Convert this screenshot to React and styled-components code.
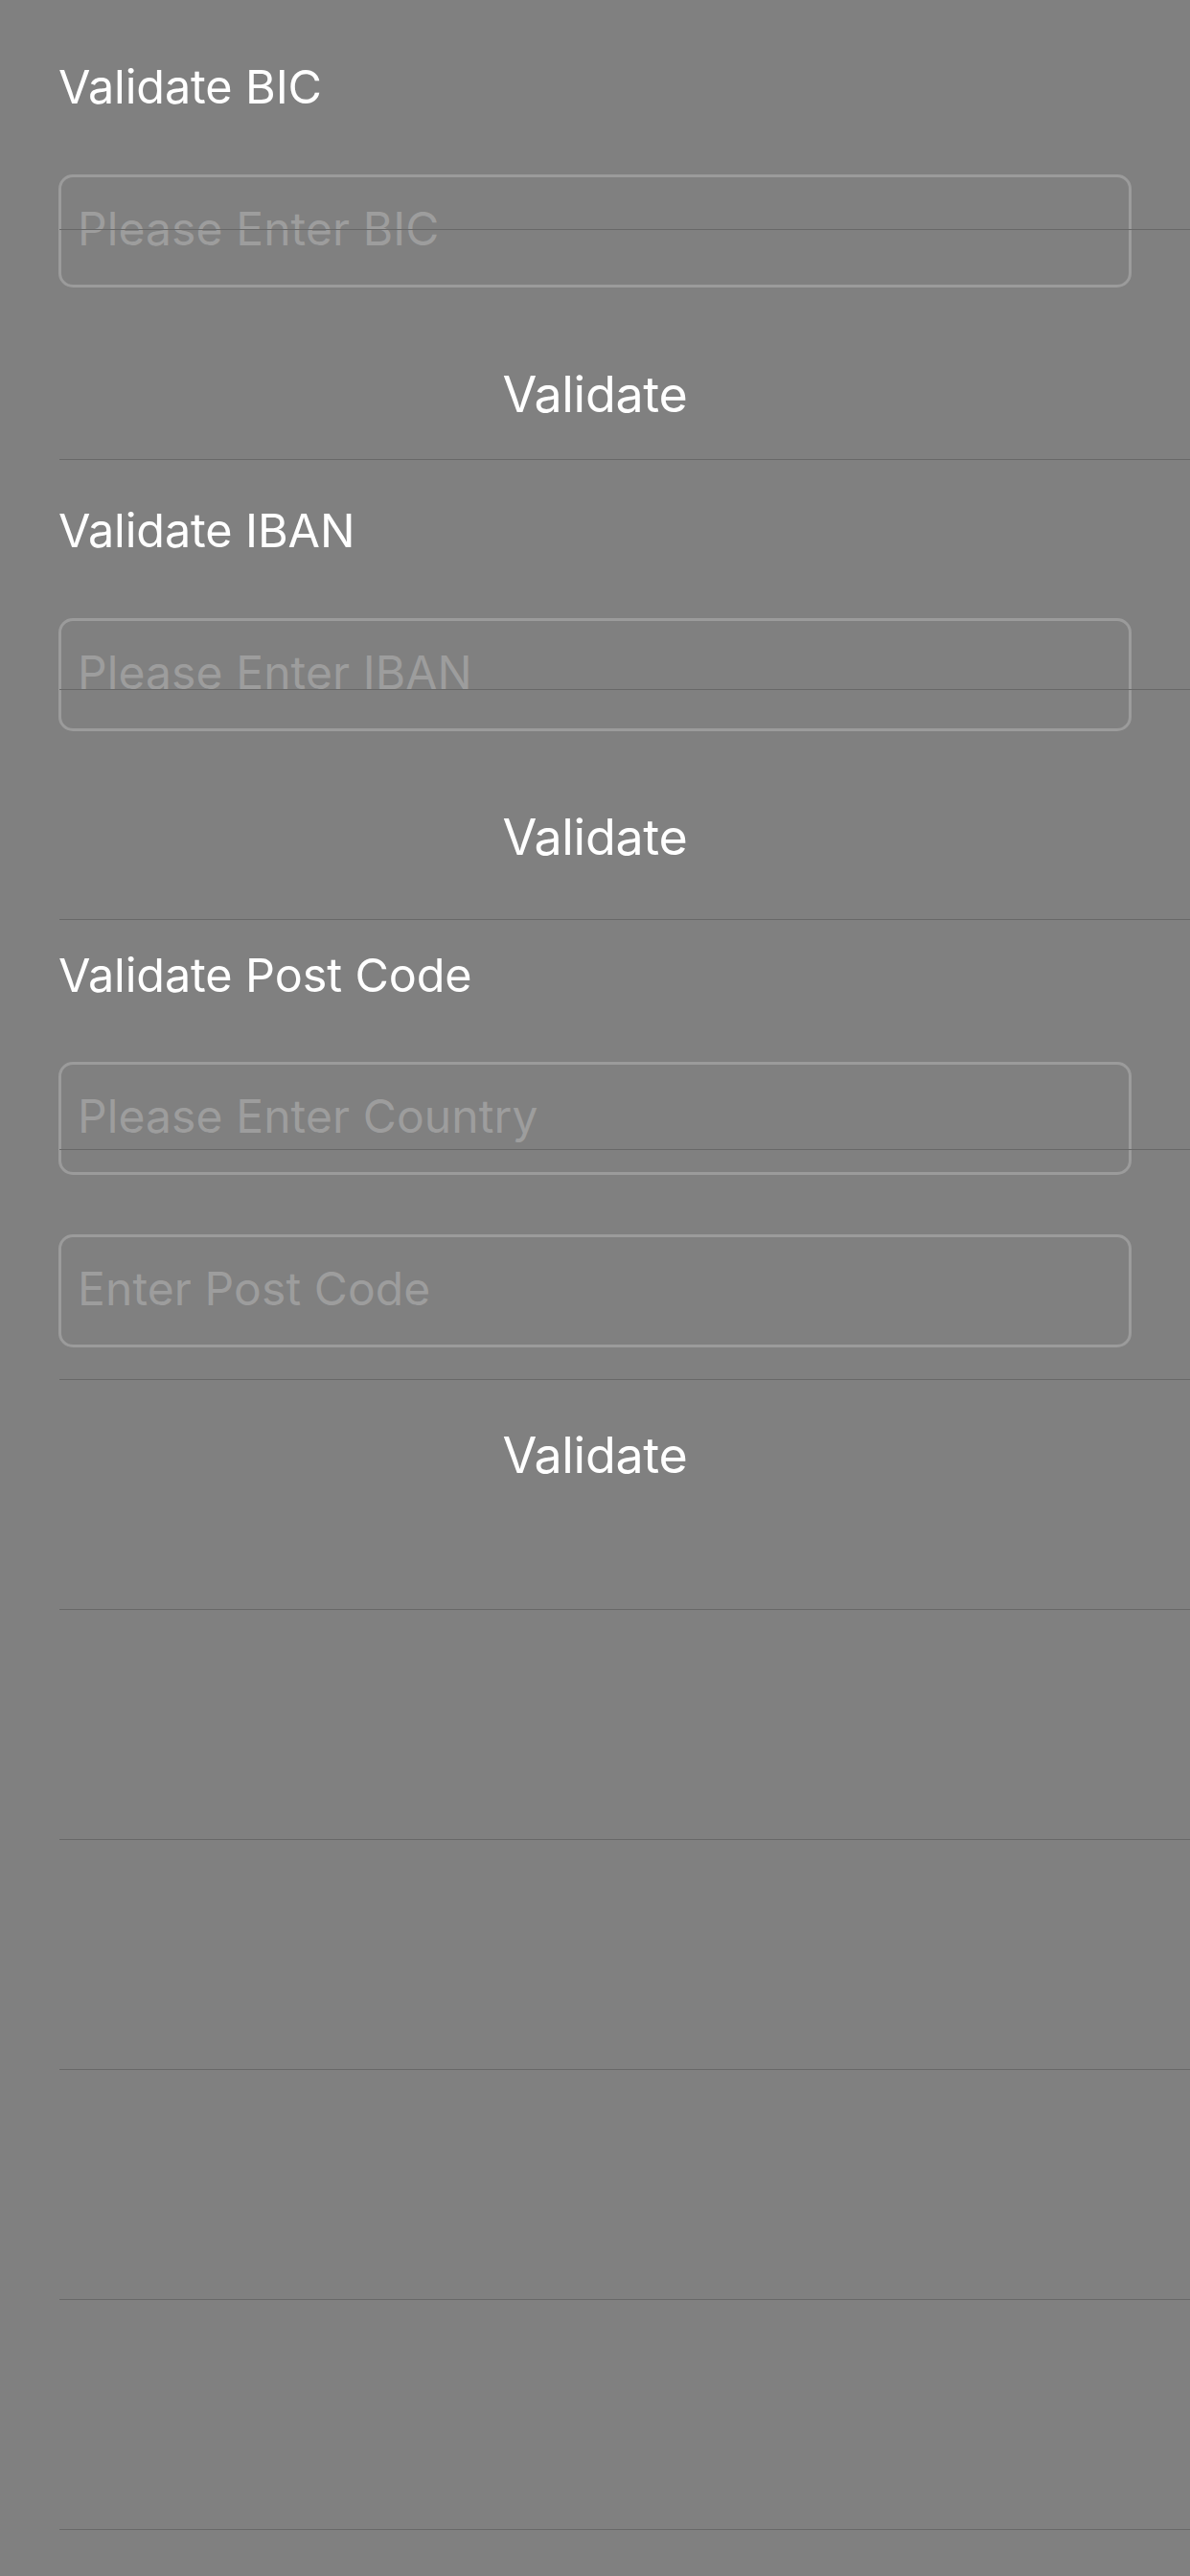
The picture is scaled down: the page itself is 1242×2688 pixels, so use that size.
import React from 'react';
import styled, { createGlobalStyle } from 'styled-components';

const GlobalStyle = createGlobalStyle`
  html, body {
    margin: 0;
    padding: 0;
    background: #808080;
  }
  * {
    box-sizing: border-box;
  }
`;

// Tela inteira: a tabela de fundo e o formulário ocupam a mesma célula da grid
const Screen = styled.div`
  display: grid;
  width: 1242px;
  height: 2688px;
  overflow: hidden;
  background: #808080;
  font-family: Inter, "Noto Sans", "Liberation Sans", sans-serif;
`;

const Form = styled.div`
  grid-area: 1 / 1;
  display: flex;
  flex-direction: column;
  padding: 0 61px;
`;

const TableLayer = styled.div`
  grid-area: 1 / 1;
  display: flex;
  flex-direction: column;
  pointer-events: none;
  z-index: 1;
`;

const EmptyRow = styled.div`
  flex: none;
  height: 240px;
  margin-left: 62px;
  border-bottom: 1px solid #686868;
`;

const Section = styled.section`
  display: flex;
  flex-direction: column;
`;

const SectionTitle = styled.h2`
  margin: ${(p) => p.$top}px 0 0;
  font-size: 48.5px;
  line-height: 49px;
  font-weight: 400;
  letter-spacing: -0.1px;
  color: #ffffff;
`;

const TextField = styled.input`
  display: block;
  width: 100%;
  height: 118px;
  margin-top: ${(p) => p.$top}px;
  padding: 0 17px 5px;
  border: 3px solid #9b9b9b;
  border-radius: 15px;
  background: transparent;
  font-family: inherit;
  font-size: 48px;
  letter-spacing: 0.1px;
  color: #ffffff;
  outline: none;

  &::placeholder {
    color: #9d9d9d;
    opacity: 1;
  }
`;

const ValidateButton = styled.button`
  display: block;
  width: 100%;
  margin-top: ${(p) => p.$top}px;
  padding: 0;
  border: none;
  background: none;
  font-family: inherit;
  font-size: 52px;
  line-height: 52px;
  font-weight: 400;
  color: #ffffff;
  text-align: center;
  letter-spacing: -0.3px;
  cursor: pointer;
`;

const sections = [
  {
    title: 'Validate BIC',
    titleTop: 66,
    fields: [{ placeholder: 'Please Enter BIC', top: 67 }],
    buttonTop: 86,
  },
  {
    title: 'Validate IBAN',
    titleTop: 91,
    fields: [{ placeholder: 'Please Enter IBAN', top: 67 }],
    buttonTop: 85,
  },
  {
    title: 'Validate Post Code',
    titleTop: 93,
    fields: [
      { placeholder: 'Please Enter Country', top: 66 },
      { placeholder: 'Enter Post Code', top: 62 },
    ],
    buttonTop: 87,
  },
];

export default function App() {
  return (
    <>
      <GlobalStyle />
      <Screen>
        <Form>
          {sections.map((s) => (
            <Section key={s.title}>
              <SectionTitle $top={s.titleTop}>{s.title}</SectionTitle>
              {s.fields.map((f) => (
                <TextField key={f.placeholder} $top={f.top} placeholder={f.placeholder} />
              ))}
              <ValidateButton $top={s.buttonTop}>Validate</ValidateButton>
            </Section>
          ))}
        </Form>
        <TableLayer>
          {Array.from({ length: 12 }).map((_, i) => (
            <EmptyRow key={i} />
          ))}
        </TableLayer>
      </Screen>
    </>
  );
}
